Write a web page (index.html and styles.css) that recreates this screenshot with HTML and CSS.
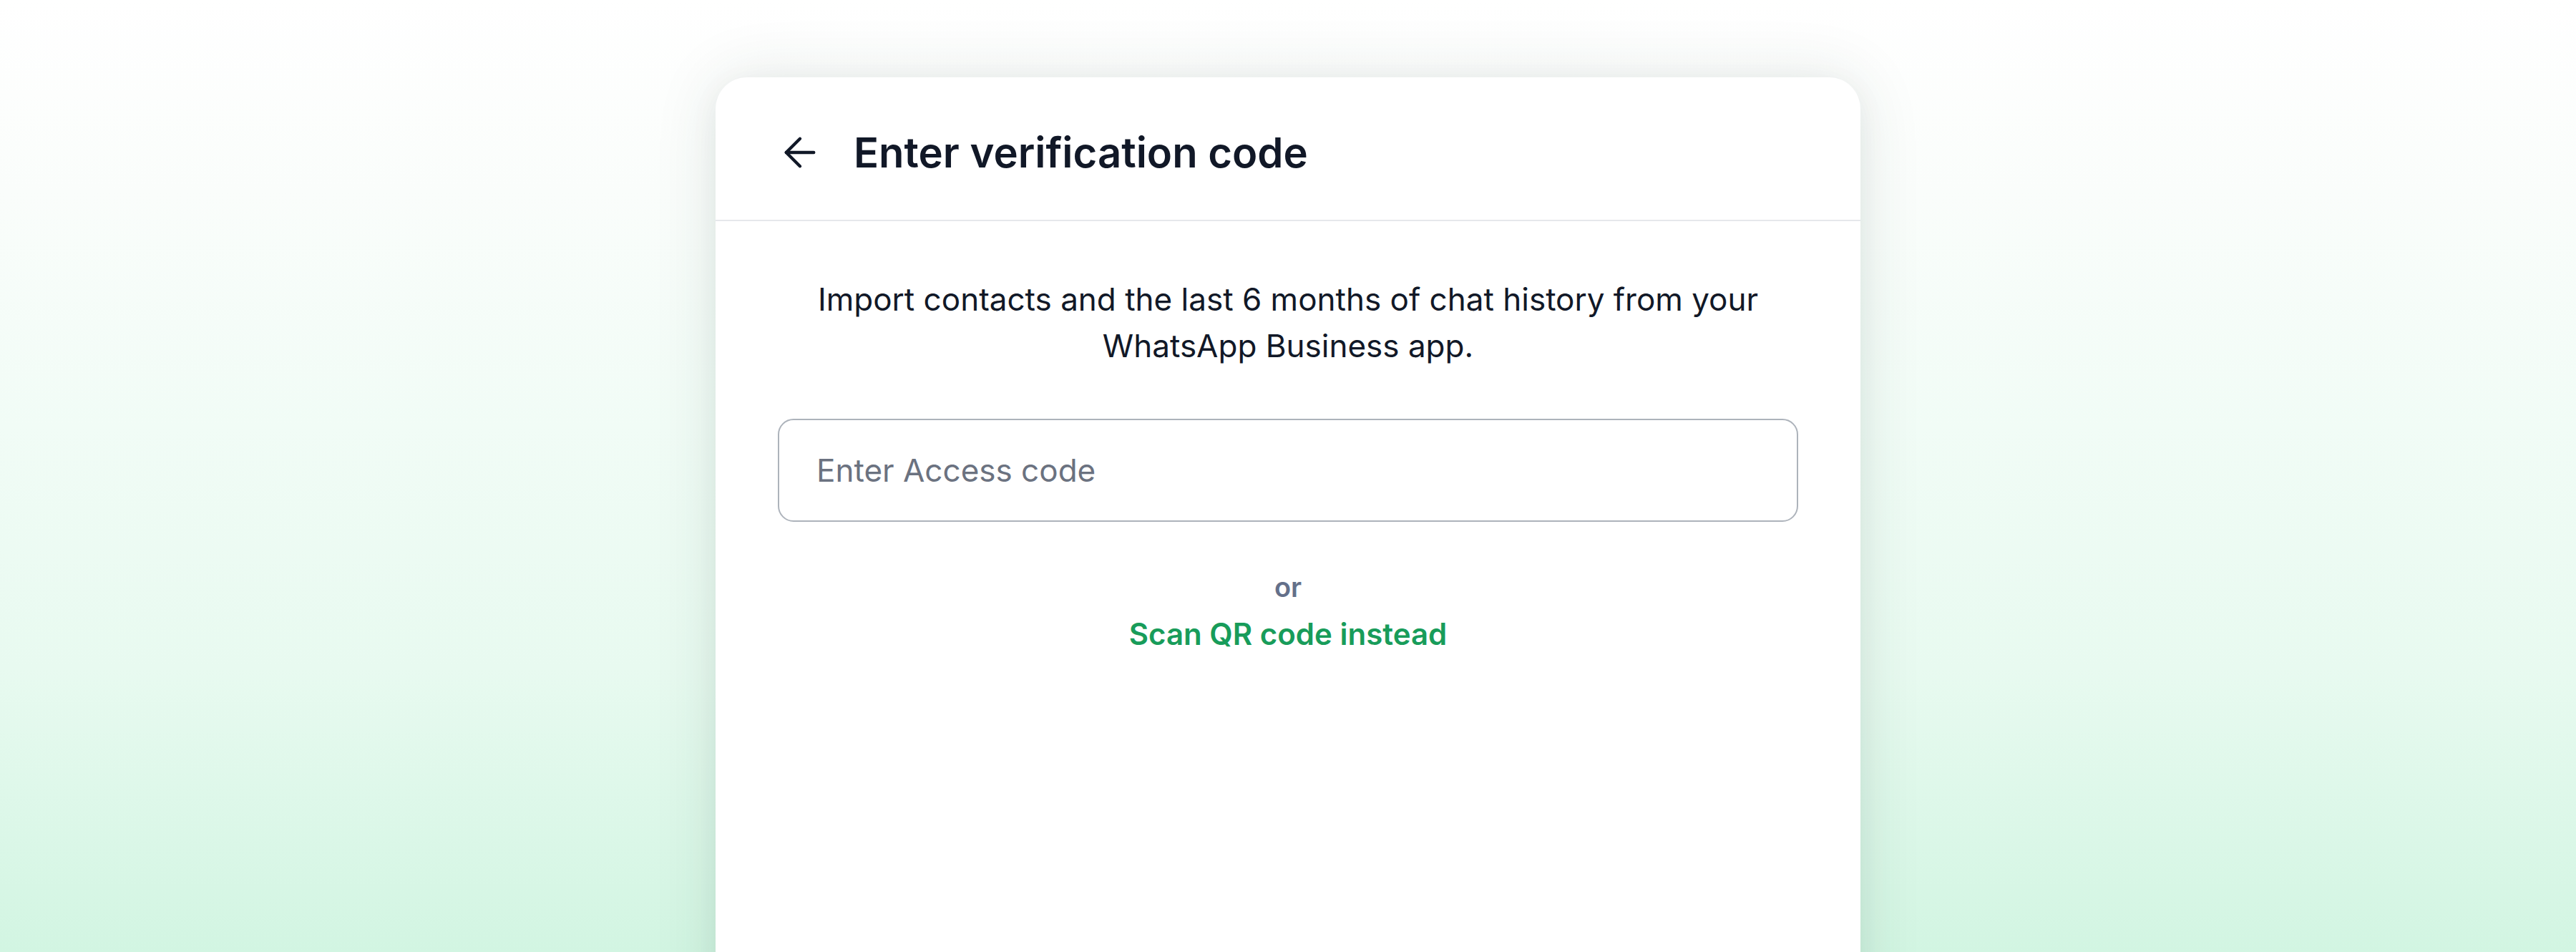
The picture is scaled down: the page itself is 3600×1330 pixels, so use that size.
FILE: index.html
```html
<!DOCTYPE html>
<html lang="en">
<head>
<meta charset="utf-8">
<title>Enter verification code</title>
<link rel="stylesheet" href="styles.css">
</head>
<body>
<main class="page">
  <section class="card">
    <header class="card-header">
      <button class="back-btn" type="button" aria-label="Back">
        <svg viewBox="0 0 24 24" fill="none" stroke="currentColor" stroke-width="1.6" stroke-linecap="round" stroke-linejoin="round">
          <path d="m12 19-7-7 7-7"/>
          <path d="M19 12H5"/>
        </svg>
      </button>
      <h1 class="title">Enter verification code</h1>
    </header>
    <div class="card-body">
      <p class="intro">Import contacts and the last 6 months of chat history from your WhatsApp Business app.</p>
      <input class="code-input" type="text" placeholder="Enter Access code">
      <p class="or">or</p>
      <a class="qr-link" href="#">Scan QR code instead</a>
    </div>
  </section>
</main>
</body>
</html>
```

FILE: styles.css
```css
* {
  box-sizing: border-box;
}

html, body {
  margin: 0;
  padding: 0;
}

body {
  height: 1330px;
  overflow: hidden;
  font-family: Inter, "Noto Sans", "Liberation Sans", sans-serif;
  background: linear-gradient(180deg, #ffffff 0%, #fafdfb 20%, #f1fcf6 45%, #e8faf0 70%, #d2f5e2 100%);
}

.page {
  display: flex;
  justify-content: center;
  padding-top: 108px;
}

.card {
  width: 1600px;
  min-height: 1400px;
  background: #ffffff;
  border-radius: 44px;
  box-shadow: 0 0 90px rgba(40, 60, 55, 0.11), 0 10px 40px rgba(40, 60, 55, 0.05);
  display: flex;
  flex-direction: column;
}

.card-header {
  height: 201px;
  padding: 10px 88px 0 85px;
  border-bottom: 2px solid #e6e8eb;
  display: flex;
  align-items: center;
  gap: 42px;
}

.back-btn {
  width: 66px;
  height: 66px;
  padding: 0;
  border: 0;
  background: transparent;
  color: #111827;
  display: flex;
  align-items: center;
  justify-content: center;
}

.back-btn svg {
  width: 66px;
  height: 66px;
  display: block;
}

.title {
  margin: 0;
  font-size: 58px;
  font-weight: 600;
  color: #111827;
}

.card-body {
  padding: 77px 87px 0;
  display: flex;
  flex-direction: column;
  align-items: center;
}

.intro {
  margin: 0;
  font-size: 44px;
  line-height: 65px;
  color: #111827;
  text-align: center;
  max-width: 1340px;
}

.code-input {
  margin-top: 69px;
  width: 100%;
  height: 144px;
  border: 2px solid #adb3bb;
  border-radius: 22px;
  padding: 0 52px;
  font-family: inherit;
  font-size: 44px;
  color: #111827;
  background: #ffffff;
  outline: none;
}

.code-input::placeholder {
  color: #6b7280;
}

.or {
  margin: 66px 0 0;
  font-size: 38px;
  line-height: 50px;
  font-weight: 600;
  color: #64708a;
}

.qr-link {
  margin-top: 12px;
  font-size: 42px;
  line-height: 57px;
  font-weight: 600;
  color: #189c5a;
  text-decoration: none;
}
```
